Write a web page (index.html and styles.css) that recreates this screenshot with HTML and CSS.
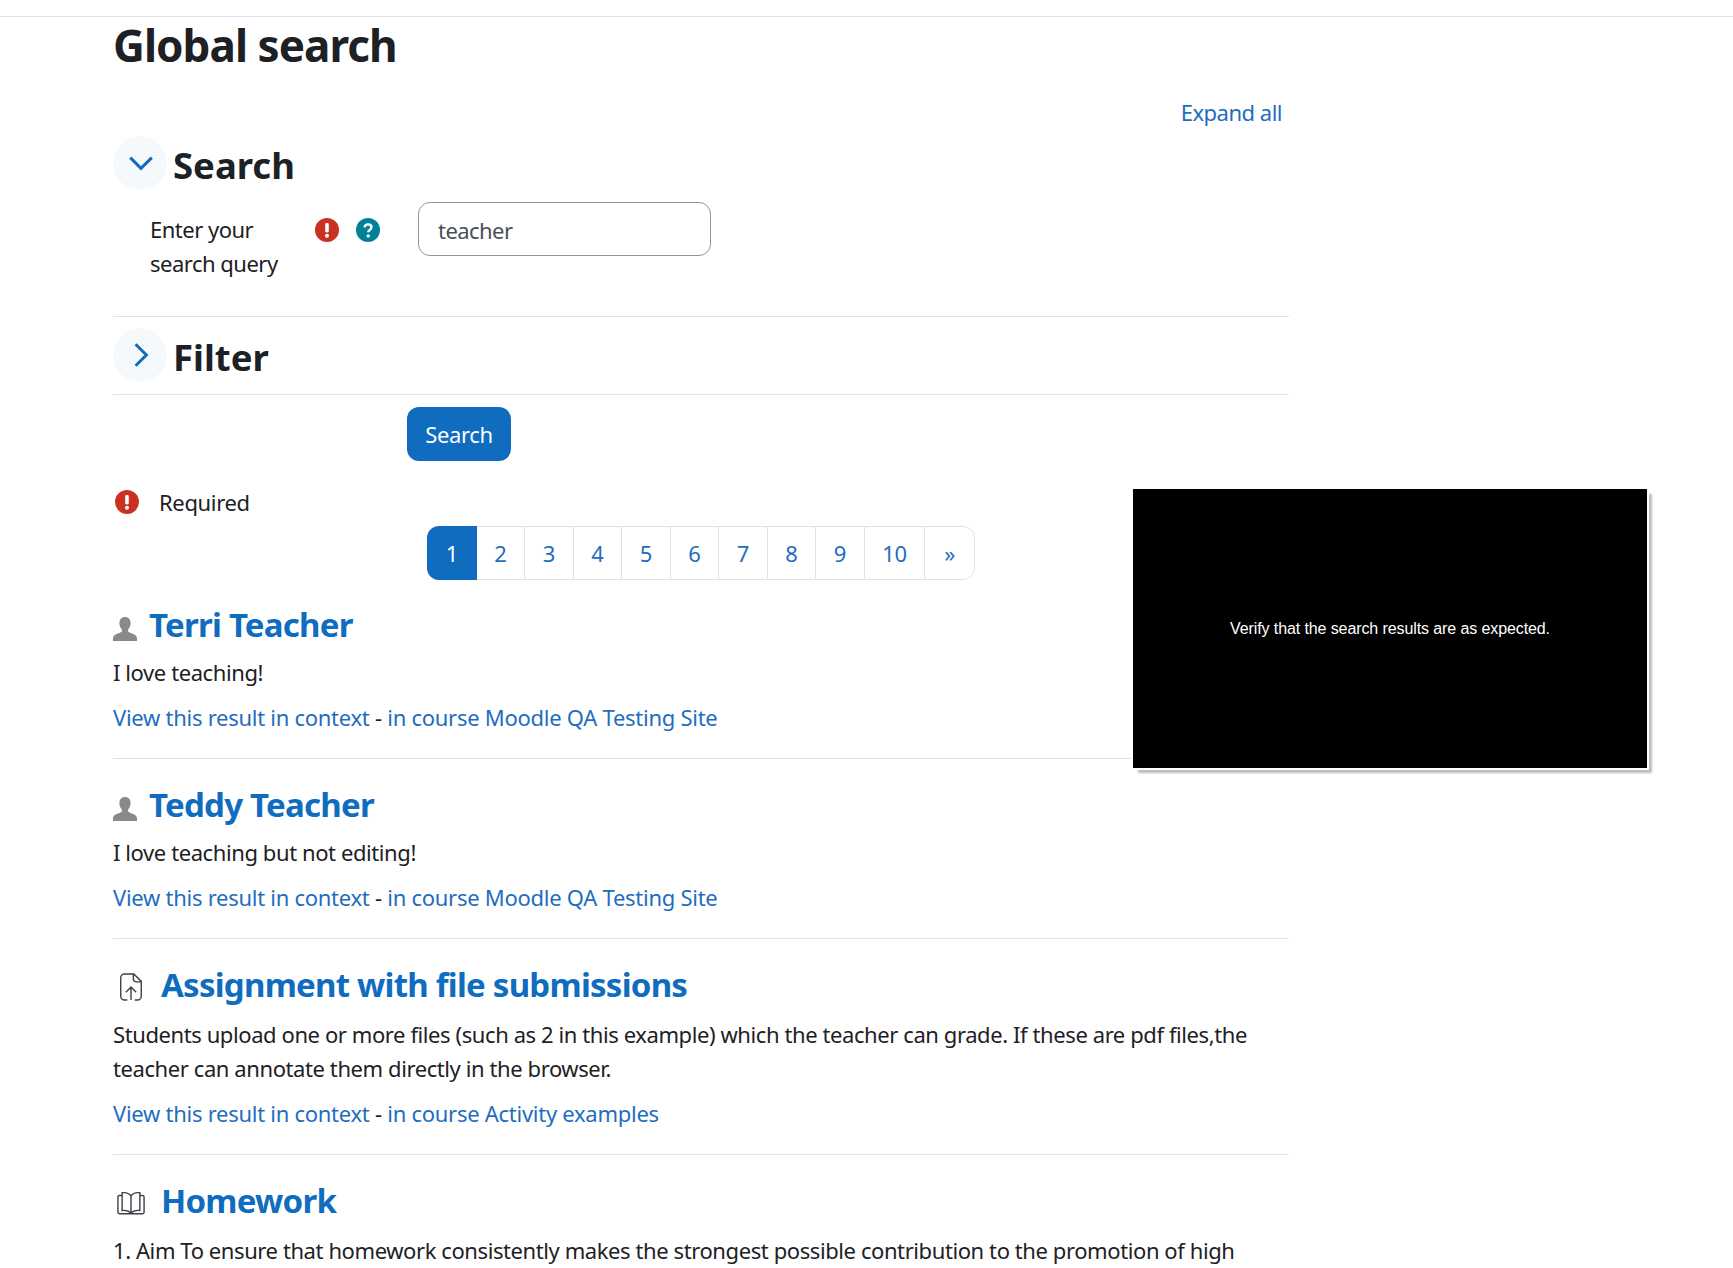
FILE: index.html
```html
<!DOCTYPE html>
<html lang="en">
<head>
<meta charset="utf-8">
<title>Global search</title>
<link rel="stylesheet" href="styles.css">
</head>
<body>
<div class="topbar"></div>
<main class="page">
  <h1 class="page-title">Global search</h1>
  <div class="expand-row"><a class="link" href="#">Expand all</a></div>

  <section class="section-head search-head">
    <span class="toggle"><svg class="chevron" width="28" height="28" viewBox="0 0 26 26"><path d="M3 8l10 10L23 8" fill="none" stroke="#0f6cbf" stroke-width="2.8"/></svg></span>
    <h2 class="section-title">Search</h2>
  </section>
  <div class="form-row">
    <label class="query-label">Enter your search query</label>
    <span class="badges">
      <svg class="badge" viewBox="0 0 24 24"><circle cx="12" cy="12" r="12" fill="#ca3120"/><rect x="10.2" y="5" width="3.6" height="9.5" rx="1.4" fill="#fff"/><circle cx="12" cy="17.8" r="2" fill="#fff"/></svg>
      <svg class="badge" viewBox="0 0 24 24"><circle cx="12" cy="12" r="12" fill="#008196"/><path d="M8.6 9.4c.2-2 1.6-3 3.5-3 2 0 3.4 1.2 3.4 2.9 0 2.6-3.3 2.6-3.3 5" fill="none" stroke="#fff" stroke-width="2.4"/><circle cx="12.2" cy="17.9" r="1.7" fill="#fff"/></svg>
    </span>
    <input class="query-input" type="text" value="teacher">
  </div>
  <hr class="rule first-rule">
  <section class="section-head filter-head">
    <span class="toggle"><svg class="chevron" width="28" height="28" viewBox="0 0 26 26"><path d="M8 3l10 10L8 23" fill="none" stroke="#0f6cbf" stroke-width="2.8"/></svg></span>
    <h2 class="section-title">Filter</h2>
  </section>
  <hr class="rule filter-rule">
  <div class="button-row"><button class="search-btn" type="button">Search</button></div>
  <div class="required-row">
    <svg class="badge" viewBox="0 0 24 24"><circle cx="12" cy="12" r="12" fill="#ca3120"/><rect x="10.2" y="5" width="3.6" height="9.5" rx="1.4" fill="#fff"/><circle cx="12" cy="17.8" r="2" fill="#fff"/></svg>
    <span>Required</span>
  </div>
  <nav class="pager">
    <a class="cell active" href="#">1</a><a class="cell" href="#">2</a><a class="cell" href="#">3</a><a class="cell" href="#">4</a><a class="cell" href="#">5</a><a class="cell" href="#">6</a><a class="cell" href="#">7</a><a class="cell" href="#">8</a><a class="cell" href="#">9</a><a class="cell wide" href="#">10</a><a class="cell" href="#">»</a>
  </nav>

  <article class="result">
    <h3 class="result-title">
      <svg class="user-icon" viewBox="0 0 24 24"><path fill="#8a8a8a" d="M12 0c3.6 0 5.6 2.6 5.6 6 0 2.6-1 5-2.5 6.6v1.8c.6 1.5 8.900 2.500 8.900 6.600v3H0v-3c0-4.100 8.300-5.100 8.900-6.600v-1.800C7.400 11 6.400 8.600 6.400 6 6.400 2.600 8.400 0 12 0z"/></svg>
      <a href="#">Terri Teacher</a>
    </h3>
    <p class="summary">I love teaching!</p>
    <p class="context"><a class="link" href="#">View this result in context</a> - <a class="link" href="#">in course Moodle QA Testing Site</a></p>
  </article>
  <article class="result">
    <h3 class="result-title">
      <svg class="user-icon" viewBox="0 0 24 24"><path fill="#8a8a8a" d="M12 0c3.6 0 5.6 2.6 5.6 6 0 2.6-1 5-2.5 6.6v1.8c.6 1.5 8.900 2.500 8.900 6.600v3H0v-3c0-4.100 8.300-5.100 8.900-6.600v-1.800C7.400 11 6.400 8.600 6.400 6 6.400 2.600 8.400 0 12 0z"/></svg>
      <a href="#">Teddy Teacher</a>
    </h3>
    <p class="summary">I love teaching but not editing!</p>
    <p class="context"><a class="link" href="#">View this result in context</a> - <a class="link" href="#">in course Moodle QA Testing Site</a></p>
  </article>
  <article class="result">
    <h3 class="result-title mod-title">
      <svg class="mod-icon" viewBox="0 0 26 30"><path fill="none" stroke="#3c4247" stroke-width="1.5" d="M9 29H6c-2 0-4-1.500-4-4V5c0-2.500 2-4 4-4h10l8 8v16c0 2.500-2 4-4 4h-3M15.500 1.500V6c0 2 1.500 3.500 3.500 3.500h4.500M13 29V15M7.500 20.500L13 15l5.500 5.500"/></svg>
      <a href="#">Assignment with file submissions</a>
    </h3>
    <p class="summary">Students upload one or more files (such as 2 in this example) which the teacher can grade. If these are pdf files,the teacher can annotate them directly in the browser.</p>
    <p class="context"><a class="link" href="#">View this result in context</a> - <a class="link" href="#">in course Activity examples</a></p>
  </article>
  <article class="result last">
    <h3 class="result-title mod-title">
      <svg class="mod-icon" viewBox="0 0 30 26"><path fill="none" stroke="#3c4247" stroke-width="1.5" d="M15 5.500C13 2.500 9.500 1.500 5.500 2v19c4-.5 7.500.5 9.500 3 2-2.500 5.500-3.500 9.500-3V2c-4-.5-7.500.5-9.500 3.500zM15 5.500V24M5.500 5H2.500c-1 0-1.500.5-1.500 1.500V23c0 1 .5 1.500 1.500 1.500H27.500c1 0 1.500-.5 1.500-1.500V6.500C29 5.500 28.500 5 27.500 5h-3"/></svg>
      <a href="#">Homework</a>
    </h3>
    <p class="summary">1. Aim To ensure that homework consistently makes the strongest possible contribution to the promotion of high</p>
  </article>
</main>
<aside class="note">Verify that the search results are as expected.</aside>
</body>
</html>
```
FILE: styles.css
```css
html, body { margin: 0; padding: 0; background: #fff; }
body {
  height: 1268px;
  overflow: hidden;
  position: relative;
  font-family: "Noto Sans", "Open Sans", sans-serif;
  font-size: 22px;
  line-height: 34px;
  letter-spacing: -0.35px;
  color: #1d2125;
}
a { text-decoration: none; color: #0f6cbf; }
.link { color: #1f6dbf; }
.topbar { height: 16px; border-bottom: 1px solid #dee2e6; }
.page { width: 1176px; margin-left: 113px; }
.page-title { margin: 0; font-size: 44px; line-height: 56px; font-weight: 700; letter-spacing: -0.95px; }
.expand-row { display: flex; justify-content: flex-end; padding-right: 7px; margin-top: 22px; height: 34px; letter-spacing: -0.5px; }
.section-head { display: flex; align-items: center; gap: 6px; height: 54px; }
.search-head { margin-top: 7px; }
.toggle { width: 54px; height: 54px; border-radius: 50%; background: #f5f9fc; display: flex; align-items: center; justify-content: center; }
.chevron { margin-left: 2px; }
.section-title { margin: 0; font-size: 36.500px; line-height: 56px; font-weight: 700; letter-spacing: 0; padding-top: 3px; }
.form-row { display: flex; align-items: flex-start; margin-top: 12px; padding-left: 37px; }
.query-label { width: 165px; margin-top: 10px; letter-spacing: -0.5px; }
.badges { display: flex; gap: 17px; width: 103px; margin-top: 16px; }
.badge { width: 24px; height: 24px; flex: none; }
.query-input { width: 293px; height: 54px; box-sizing: border-box; border: 1px solid #8f959e; border-radius: 12px; padding: 2px 19px 0; font: inherit; letter-spacing: -0.55px; color: #495057; background: #fff; outline: none; }
.rule { border: 0; border-top: 1px solid #dee2e6; margin: 0; }
.first-rule { margin-top: 36px; }
.filter-head { margin-top: 11px; }
.filter-rule { margin-top: 12px; }
.button-row { padding-left: 294px; margin-top: 12px; }
.search-btn { width: 104px; height: 54px; border: 0; border-radius: 12px; background: #0f6cbf; color: #fff; font: inherit; letter-spacing: -0.35px; padding: 0; display: block; }
.required-row { display: flex; align-items: center; gap: 20px; margin-top: 24px; height: 34px; padding-left: 2px; }
.pager { display: flex; width: 548px; margin: 7px 0 0 314px; height: 54px; box-sizing: border-box; border: 1px solid #dee2e6; border-radius: 12px; }
.cell { width: 48.700px; display: flex; align-items: center; justify-content: center; border-right: 1px solid #dee2e6; box-sizing: border-box; color: #1f6dbf; }
.cell:last-child { border-right: 0; }
.cell.wide { width: 61px; }
.cell.active { width: 49.700px; background: #0f6cbf; color: #fff; border-radius: 12px 0 0 12px; margin: -1px 0 -1px -1px; border: 0; }
.result { border-bottom: 1px solid #dee2e6; padding-bottom: 24.500px; }
.result.last { border-bottom: 0; }
.result-title { margin: 0; font-size: 33px; line-height: 46px; font-weight: 700; letter-spacing: -0.75px; display: flex; align-items: center; gap: 12px; }
.result:first-of-type { margin-top: 22px; }
.result + .result { margin-top: 23px; }
.mod-title { padding-bottom: 2px; }
.user-icon { width: 24px; height: 24px; flex: none; margin-top: 8px; }
.mod-icon { width: 28px; height: 28px; flex: none; margin: 4px 4px 0 4px; }
.summary, .context { margin: 0; }
.summary { margin-top: 7px; letter-spacing: -0.41px; }
.context { margin-top: 10.500px; letter-spacing: -0.27px; }
.note {
  position: absolute;
  left: 1133px;
  top: 489px;
  width: 514px;
  height: 279px;
  background: #000;
  color: #fff;
  font: 16px/1.2 "Liberation Sans", Arial, sans-serif;
  letter-spacing: -0.1px;
  display: flex;
  align-items: center;
  justify-content: center;
  box-shadow: 0 0 0 2px #fff, 5px 5px 2px 0 #b9bcbe;
}
```
